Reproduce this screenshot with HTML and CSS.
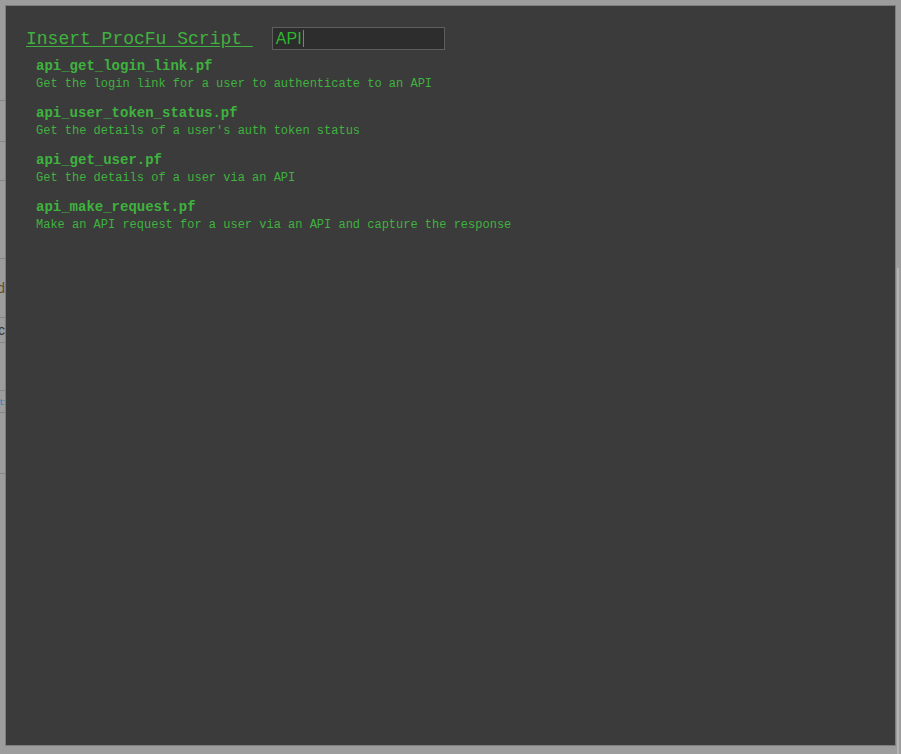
FILE: index.html
```html
<!DOCTYPE html>
<html lang="en">
<head>
    <meta charset="UTF-8">
    <meta name="viewport" content="width=device-width, initial-scale=1.0">
    <title>Insert ProcFu Script</title>
    <link rel="stylesheet" href="styles.css">
</head>
<body>
    <!-- page behind the dialog, only a sliver shows on the left -->
    <div class="page">
        <div class="page-row" style="height: 101px"><span class="cell"></span></div>
        <div class="page-row" style="height: 41px"><span class="cell"></span></div>
        <div class="page-row" style="height: 39px"><span class="cell"></span></div>
        <div class="page-row" style="height: 78px"><span class="cell"></span></div>
        <div class="page-row" style="height: 59px"><span class="cell tan">Record</span></div>
        <div class="page-row" style="height: 25px"><span class="cell">Sync</span></div>
        <div class="page-row" style="height: 48px"><span class="cell"></span></div>
        <div class="page-row" style="height: 22px"><span class="cell blue">Edit:</span></div>
        <div class="page-row" style="height: 61px"><span class="cell"></span></div>
    </div>
    <div class="scroll-strip"></div>

    <div class="dialog">
        <div class="dialog-header">
            <span class="dialog-title">Insert ProcFu Script&nbsp;</span>
            <div class="search-box">API<span class="caret"></span></div>
        </div>
        <div id="script-list" class="script-list"></div>
    </div>

    <script>
        const scripts = [
            ["api_get_login_link.pf", "Get the login link for a user to authenticate to an API"],
            ["api_user_token_status.pf", "Get the details of a user's auth token status"],
            ["api_get_user.pf", "Get the details of a user via an API"],
            ["api_make_request.pf", "Make an API request for a user via an API and capture the response"]
        ];

        let listHTML = "";
        for (const [name, desc] of scripts) {
            listHTML += `<div class="script-item">
                <div class="script-name">${name}</div>
                <div class="script-desc">${desc}</div>
            </div>`;
        }
        document.getElementById("script-list").innerHTML = listHTML;
    </script>
</body>
</html>
```

FILE: styles.css
```css
body {
    margin: 0;
    background-color: #9d9d9d;
    font-family: "Liberation Mono", "Courier New", monospace;
    height: 754px;
    overflow: hidden;
}
.page {
    width: 400px;
}
.page-row {
    display: flex;
    align-items: center;
    border-bottom: 1px solid #868686;
    box-sizing: border-box;
}
.cell {
    display: flex;
    justify-content: flex-end;
    width: 5px;
    overflow: hidden;
    white-space: nowrap;
    font-family: "Liberation Sans", Arial, sans-serif;
    font-size: 14px;
    color: #333;
}
.cell.tan {
    color: #6b4a1f;
}
.cell.blue {
    color: #2f7fc1;
    font-size: 9px;
}
.scroll-strip {
    position: absolute;
    right: 2px;
    top: 268px;
    width: 2px;
    height: 486px;
    background-color: #b4b4b4;
}
.dialog {
    position: absolute;
    left: 5px;
    top: 5px;
    width: 891px;
    height: 741px;
    box-sizing: border-box;
    background-color: #3b3b3b;
    border: 1px solid #7d7d7d;
    padding: 21px 20px;
    color: #3fb23f;
}
.dialog-header {
    display: flex;
    align-items: center;
    height: 23px;
}
.dialog-title {
    font-size: 18px;
    line-height: 22px;
    text-decoration: underline;
    text-underline-offset: 2px;
    white-space: pre;
}
.search-box {
    display: flex;
    align-items: center;
    margin-left: 19px;
    width: 173px;
    height: 23px;
    box-sizing: border-box;
    border: 1px solid #5e5e5e;
    background-color: #2d2d2d;
    padding-left: 3px;
    font-family: "Liberation Sans", Arial, sans-serif;
    font-size: 16px;
    color: #2fb52f;
}
.caret {
    display: inline-block;
    width: 1px;
    height: 17px;
    margin-left: 1px;
    background-color: #2fb52f;
}
.script-list {
    margin-top: 7px;
    padding-left: 10px;
}
.script-item {
    height: 47px;
}
.script-name {
    font-size: 14px;
    font-weight: bold;
    line-height: 18px;
}
.script-desc {
    font-size: 12px;
    line-height: 18px;
}
```
